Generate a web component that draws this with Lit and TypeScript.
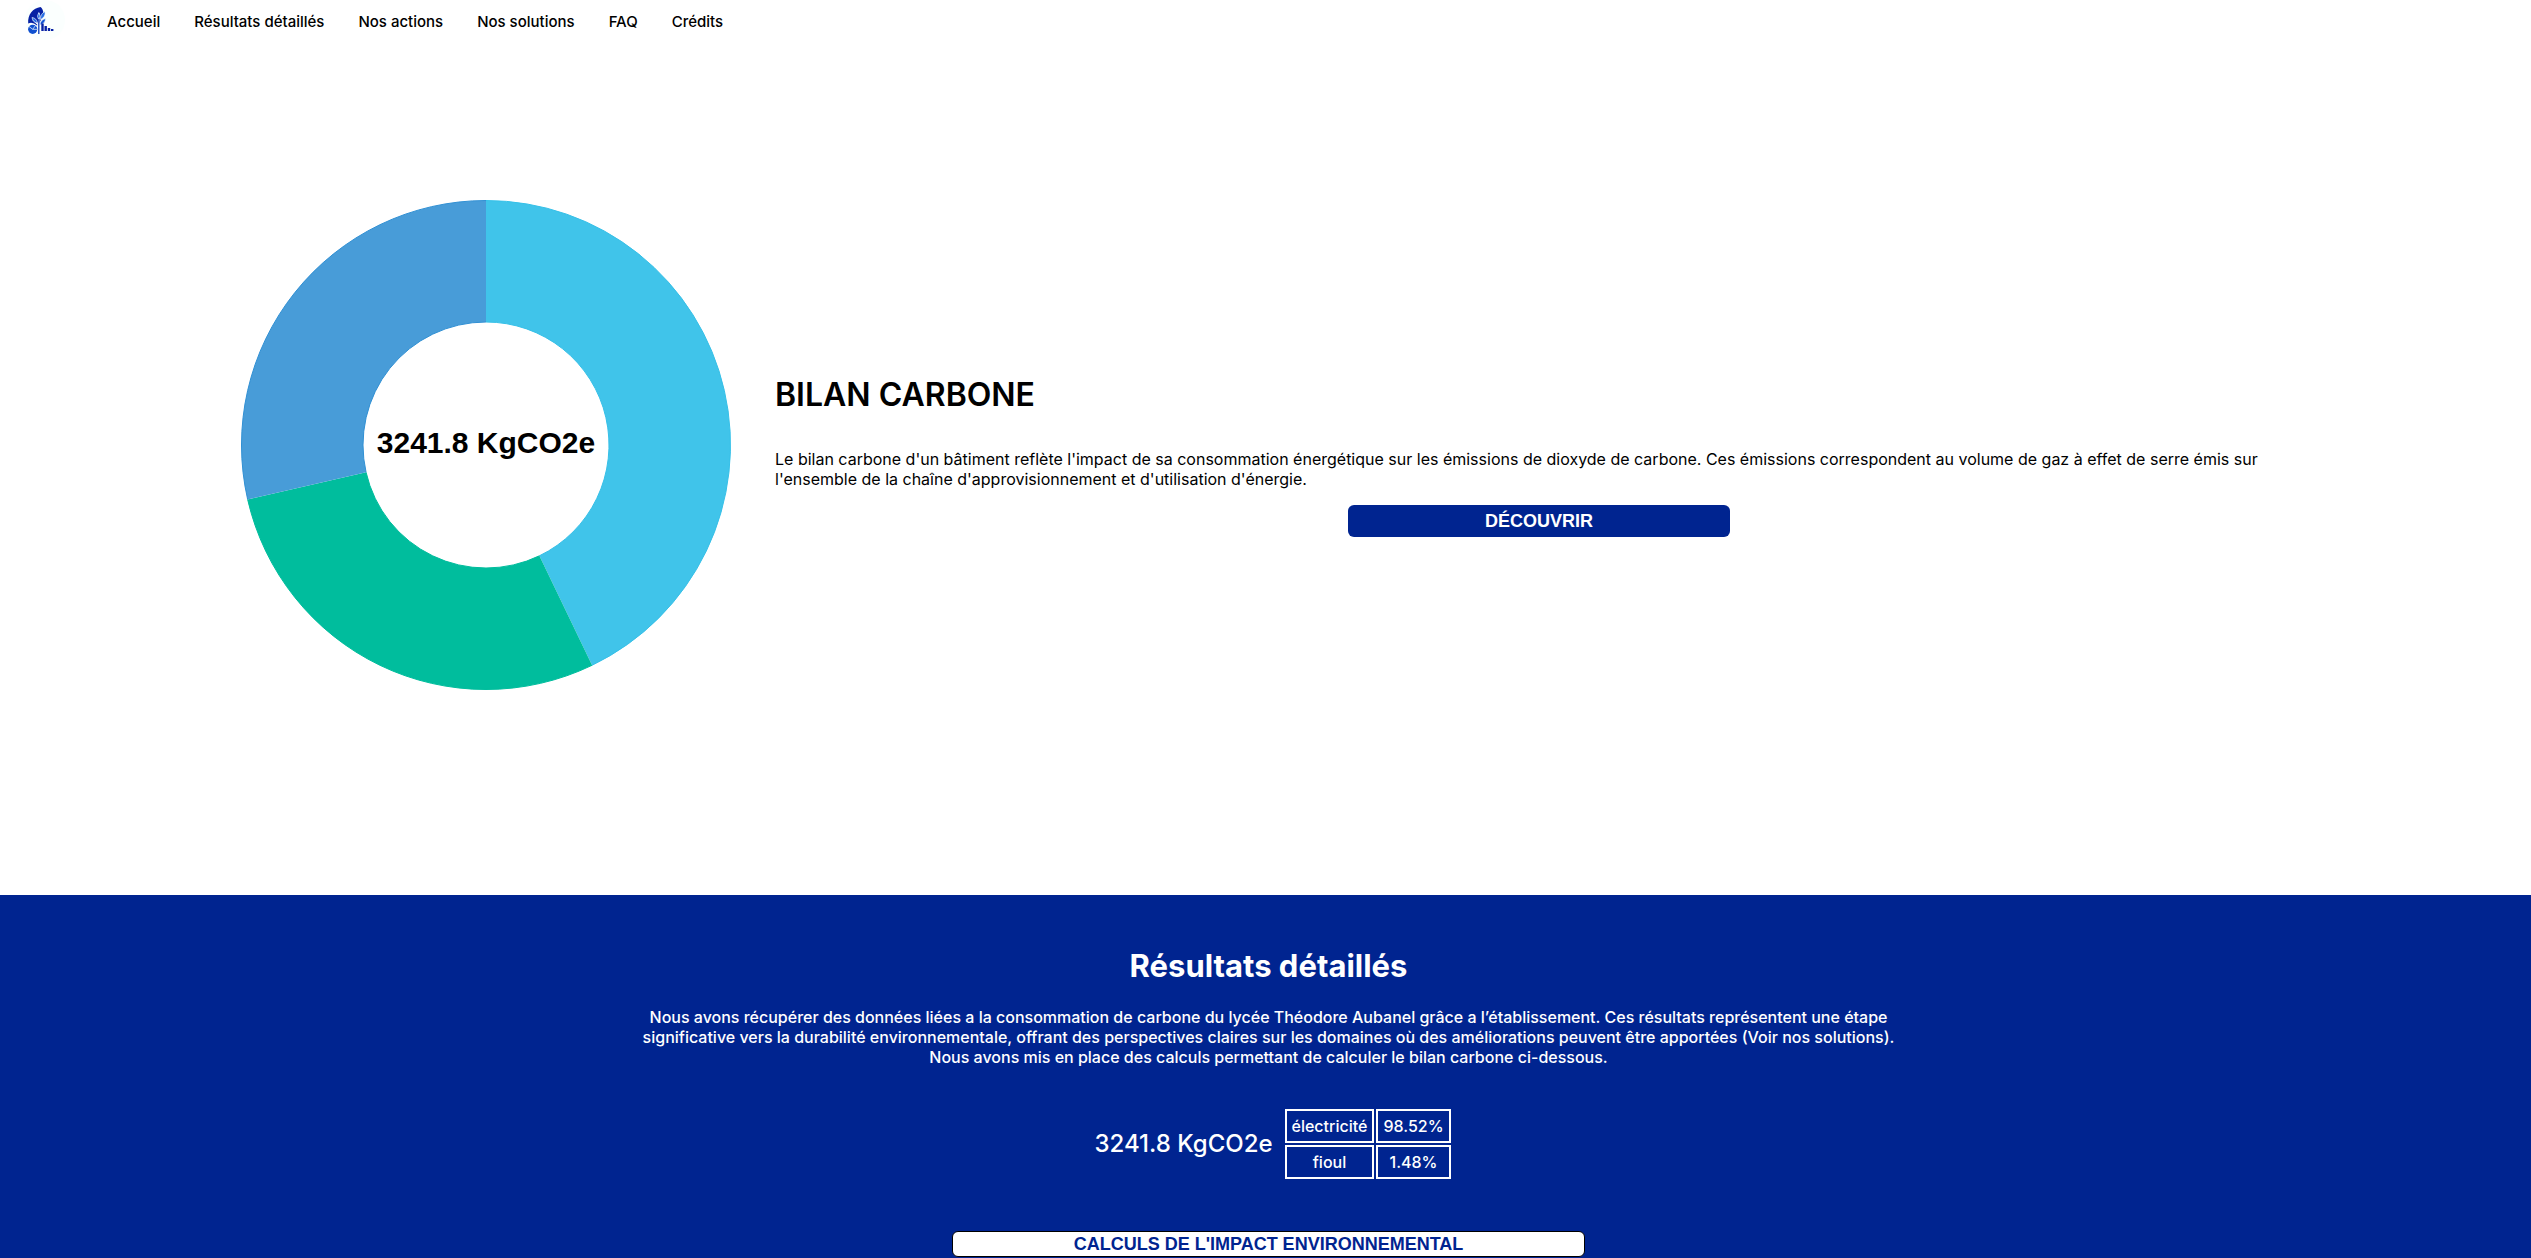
import { LitElement, html, css, svg } from "lit";
import { customElement } from "lit/decorators.js";

const links = ["Accueil", "Résultats détaillés", "Nos actions", "Nos solutions", "FAQ", "Crédits"];

const slices = [
  { value: 3, fill: "#40c4ea", edge: "#36c0e8" },
  { value: 2, fill: "#00bd9d", edge: "#00bd9d" },
  { value: 2, fill: "#489cd8", edge: "#3090d4" },
];

const sources = [
  { name: "électricité", share: "98.52%" },
  { name: "fioul", share: "1.48%" },
];

@customElement("site-logo")
export class SiteLogo extends LitElement {
  static styles = css`
    :host { display: block; }
    svg { display: block; width: 40px; height: 40px; }
  `;
  render() {
    return html`<svg viewBox="0 0 40 40" aria-hidden="true">
      <circle cx="20" cy="20" r="20" fill="#fbfffe" />
      <path d="M15.500 7C8 8 2.500 14.500 3.200 23.500Q7.500 21.500 12 25.500L15 22L18.500 13.500Q18 8.500 15.500 7Z" fill="#0721a4" />
      <path d="M13.800 34V13M13.600 25L8 19.500M14 26L19 21" stroke="#fff" stroke-width="1.600" fill="none" />
      <path d="M13.800 12.500Q16.500 16 13.800 20Q11.200 16 13.800 12.500Z" fill="#2a6fe3" stroke="#fff" stroke-width=".6" />
      <path d="M7 17.500Q11.500 18 12.500 23Q7.800 22.500 7 17.500Z" fill="#2a6fe3" stroke="#fff" stroke-width=".6" />
      <path d="M20 11.500Q21 17 15.500 19.500Q15 14 20 11.500Z" fill="#2a6fe3" stroke="#fff" stroke-width=".6" />
      <path d="M20.500 18.500Q20.500 23.500 15 25Q15 20 20.500 18.500Z" fill="#1457d4" stroke="#fff" stroke-width=".6" />
      <path d="M13.800 34V19" stroke="#0b3bb9" stroke-width="1.300" />
      <circle cx="7.700" cy="29.300" r="4.600" fill="#1050d0" />
      <path d="M7.700 29.300L4 26.500M7.700 29.300L10.500 25.500M7.700 29.300H12.500" stroke="#fff" stroke-width=".7" />
      <path d="M16.300 23.500H18.700V31H16.300ZM19.500 26H21.900V31H19.500ZM22.800 28H25.200V31H22.800ZM26 29H28.400V31H26Z" fill="#0721a4" />
    </svg>`;
  }
}

@customElement("donut-chart")
export class DonutChart extends LitElement {
  static styles = css`
    :host { display: block; }
    svg { display: block; width: 100%; }
    .total { font: bold 30px "Liberation Sans", Arial, sans-serif; text-anchor: middle; }
  `;
  render() {
    const total = slices.reduce((sum, s) => sum + s.value, 0);
    const at = (part: number, r: number) => {
      const a = (part / total) * Math.PI * 2;
      return `${(245 + r * Math.sin(a)).toFixed(2)} ${(245 - r * Math.cos(a)).toFixed(2)}`;
    };
    let start = 0;
    const paths = slices.map((s) => {
      const end = start + s.value;
      const outer = `M${at(start, 244.5)}A244.5 244.5 0 0 1 ${at(end, 244.5)}`;
      const inner = `${at(end, 123)}A123 123 0 0 0 ${at(start, 123)}`;
      start = end;
      return svg`<path d=${`${outer}L${inner}Z`} fill=${s.fill} />
        <path d=${`${outer}M${inner}`} fill="none" stroke=${s.edge} />`;
    });
    return html`<svg viewBox="0 0 490 490" role="img" aria-label="3241.8 KgCO2e">
      ${paths}
      <text class="total" x="245" y="253">3241.8 KgCO2e</text>
    </svg>`;
  }
}

@customElement("app-root")
export class AppRoot extends LitElement {
  static styles = css`
    :host {
      display: flex;
      flex-direction: column;
      min-height: 100vh;
      background: #fff;
      color: #000;
      font: 500 16px/20px Inter, "Liberation Sans", sans-serif;
    }
    h1, h2, p { margin: 0; }
    .bar { display: flex; align-items: center; height: 40px; padding: 0 25px; gap: 42px; }
    .menu { display: flex; gap: 34px; padding-top: 4px; }
    .link { color: inherit; text-decoration: none; font-size: 15px; }
    .balance {
      display: flex;
      align-items: center;
      gap: 44px;
      height: 855px;
      padding: 0 9% 45px 241px;
      box-sizing: border-box;
    }
    .chart { flex: 0 0 490px; }
    .about { flex: 1; display: flex; flex-direction: column; padding-top: 22px; }
    .heading { font-size: 32px; line-height: 40px; font-weight: 600; margin-bottom: 34px; }
    .text { font-weight: 400; }
    .button {
      box-sizing: border-box;
      border-radius: 6px;
      padding: 0;
      font: bold 18px "Liberation Sans", Arial, sans-serif;
      cursor: pointer;
    }
    .discover { align-self: center; width: 25%; height: 32px; margin-top: 16px; border: 0; background: #002490; color: #fff; }
    .results {
      flex: 1;
      display: flex;
      flex-direction: column;
      align-items: center;
      padding: 51px 0 0 6px;
      background: #002490;
      color: #fff;
      text-align: center;
    }
    .title { font-size: 31px; line-height: 40px; font-weight: 700; margin-bottom: 21px; }
    .intro { max-width: 1266px; }
    .figures { display: flex; align-items: center; gap: 10px; margin-top: 40px; padding-left: 10px; }
    .amount { font-size: 24px; line-height: 28px; }
    .table { border-collapse: separate; border-spacing: 2px; }
    .cell { border: 2px solid #fff; padding: 5px; text-align: center; }
    .calc { width: 25vw; height: 26px; margin-top: 50px; border: 1px solid #000; background: #fff; color: #002490; }
  `;

  render() {
    return html`
      <header class="bar">
        <site-logo></site-logo>
        <nav class="menu">${links.map((l) => html`<a class="link" href="#">${l}</a>`)}</nav>
      </header>
      <section class="balance">
        <donut-chart class="chart"></donut-chart>
        <div class="about">
          <h1 class="heading">BILAN CARBONE</h1>
          <p class="text">Le bilan carbone d'un bâtiment reflète l'impact de sa consommation énergétique sur les émissions de dioxyde de carbone. Ces émissions correspondent au volume de gaz à effet de serre émis sur l'ensemble de la chaîne d'approvisionnement et d'utilisation d'énergie.</p>
          <button class="button discover">DÉCOUVRIR</button>
        </div>
      </section>
      <section class="results">
        <h2 class="title">Résultats détaillés</h2>
        <p class="intro">Nous avons récupérer des données liées a la consommation de carbone du lycée Théodore Aubanel grâce a l’établissement. Ces résultats représentent une étape significative vers la durabilité environnementale, offrant des perspectives claires sur les domaines où des améliorations peuvent être apportées (Voir nos solutions).<br />Nous avons mis en place des calculs permettant de calculer le bilan carbone ci-dessous.</p>
        <div class="figures">
          <p class="amount">3241.8 KgCO2e</p>
          <table class="table">
            <tbody>
              ${sources.map((s) => html`<tr><td class="cell">${s.name}</td><td class="cell">${s.share}</td></tr>`)}
            </tbody>
          </table>
        </div>
        <button class="button calc">CALCULS DE L'IMPACT ENVIRONNEMENTAL</button>
      </section>
    `;
  }
}
